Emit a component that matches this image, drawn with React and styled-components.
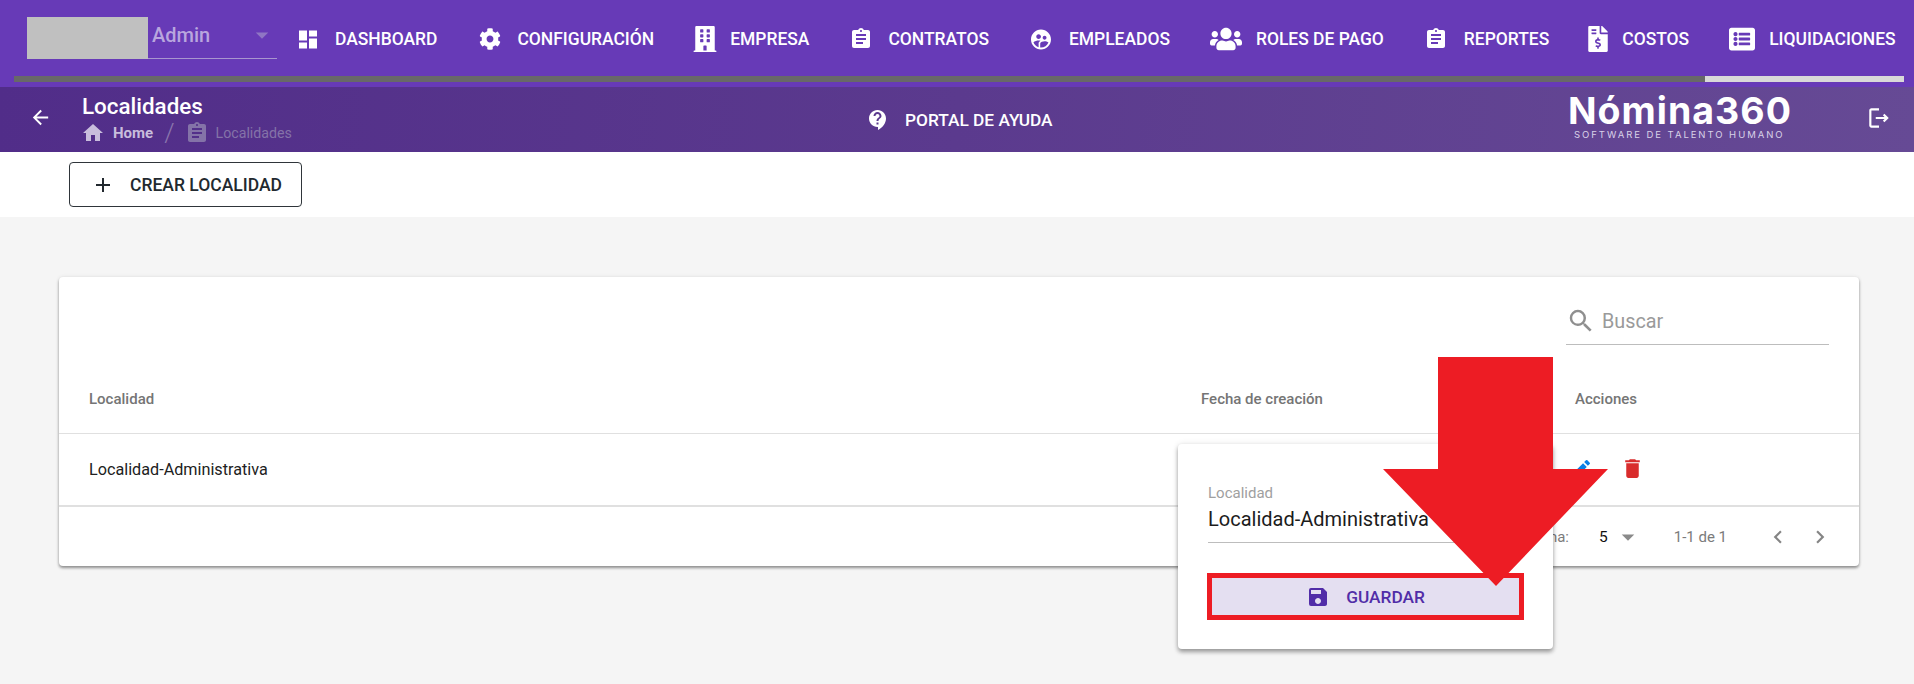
import React from "react";
import styled, { createGlobalStyle } from "styled-components";
import {
  MdDashboard, MdAssignment, MdSupervisedUserCircle, MdArrowBack, MdHome, MdContactSupport,
  MdOutlineLogout, MdAdd, MdSearch, MdEdit, MdDelete, MdArrowDropDown, MdChevronLeft, MdChevronRight, MdSave,
} from "react-icons/md";
import { FaCog, FaBuilding, FaUsers, FaFileInvoiceDollar, FaListAlt } from "react-icons/fa";

const Global = createGlobalStyle`
  html, body { margin: 0; padding: 0; background: #f5f5f5; }
  body { font-family: Roboto, "Liberation Sans", sans-serif; overflow: hidden; }
  * { box-sizing: border-box; }
`;

const Page = styled.div`
  width: 1914px;
  height: 684px;
  position: relative;
  overflow: hidden;
  background: #f5f5f5;
`;

const TopBar = styled.header`
  height: 87px;
  background: #673ab7;
`;

const NavRow = styled.div`
  height: 76px;
  display: flex;
  align-items: flex-start;
`;

const RoleSelect = styled.div`
  position: relative;
  width: 248px;
  height: 59px;
  margin-left: 29px;
  border-bottom: 1px solid #a995cf;
  color: #b9a6de;
  font-size: 20px;
  font-weight: 500;
  flex: none;
`;

const RoleName = styled.span`
  position: absolute;
  left: 123px;
  top: 24px;
  line-height: 22px;
`;

const RoleCaret = styled(MdArrowDropDown)`
  position: absolute;
  right: 0;
  top: 20px;
  color: #8f76c4;
  font-size: 30px;
`;

const RedactedBox = styled.div`
  position: absolute;
  left: -2px;
  top: 17px;
  width: 121px;
  height: 42px;
  background: #c0c0c0;
`;

const Nav = styled.nav`
  display: flex;
  align-items: center;
  height: 78px;
  margin-left: 18.5px;
`;

const NavItem = styled.a`
  display: flex;
  align-items: center;
  margin-right: ${(p) => p.$after}px;
  color: #fff;
  font-size: 17.46px;
  font-weight: 500;
  white-space: nowrap;
  gap: ${(p) => p.$gap}px;
`;

const NavIcon = styled.span`
  display: flex;
  align-items: center;
  justify-content: center;
  flex: none;
  width: ${(p) => p.$w}px;
  font-size: ${(p) => p.$size}px;
  color: #fff;
`;

const ScrollTrack = styled.div`
  height: 6px;
  margin: 0 10px 0 14px;
  background: #d9d9d9;
`;

const ScrollThumb = styled.div`
  height: 100%;
  width: 1691px;
  background: #686868;
`;

const SubBar = styled.div`
  height: 65px;
  display: flex;
  align-items: center;
  background: linear-gradient(95deg, #512d89 0%, #5b3a8e 50%, #664a95 100%);
  color: #fff;
`;

const BackIcon = styled(MdArrowBack)`
  font-size: 23px;
  margin-left: 29px;
  margin-top: -4px;
  flex: none;
`;

const TitleBlock = styled.div`
  margin-left: 30px;
  width: 784px;
  flex: none;
  padding-bottom: 2px;
`;

const PageTitle = styled.div`
  font-size: 22.4px;
  font-weight: 500;
  line-height: 26px;
`;

const Crumbs = styled.div`
  display: flex;
  align-items: center;
  height: 22px;
  margin-top: 3px;
  font-size: 14px;
`;

const CrumbHome = styled.span`
  display: flex;
  align-items: center;
  gap: 8px;
  font-weight: 700;
  color: #c8bddc;
  font-size: 15px;
  svg { font-size: 24px; margin-left: -1px; }
`;

const CrumbSep = styled.span`
  color: #8a76ad;
  font-size: 26px;
  font-weight: 300;
  margin: 0 13px 0 11px;
`;

const CrumbCurrent = styled.span`
  display: flex;
  align-items: center;
  gap: 7px;
  color: #8473a8;
  font-size: 14.2px;
  svg { font-size: 24px; margin-left: -3px; }
`;

const Portal = styled.div`
  display: flex;
  align-items: center;
  gap: 15px;
  width: 702px;
  flex: none;
  font-size: 17.3px;
  font-weight: 500;
  svg { font-size: 24px; }
`;

const Logo = styled.div`
  width: 298px;
  flex: none;
  padding-bottom: 6px;
`;

const LogoName = styled.div`
  font-family: Inter, "Open Sans", sans-serif;
  font-weight: 700;
  font-size: 37.5px;
  line-height: 36px;
  letter-spacing: 1px;
`;

const LogoTag = styled.div`
  font-family: Inter, "Open Sans", sans-serif;
  font-size: 9.5px;
  letter-spacing: 1.95px;
  line-height: 12px;
  margin-left: 6px;
  color: #d9d2e8;
  white-space: nowrap;
`;

const ExitIcon = styled(MdOutlineLogout)`
  font-size: 26px;
  margin-top: -3px;
`;

const ActionBar = styled.div`
  height: 65px;
  background: #fff;
  padding: 10px 0 0 69px;
`;

const CreateButton = styled.button`
  display: flex;
  align-items: center;
  gap: 15px;
  width: 233px;
  height: 45px;
  padding: 0 0 0 22px;
  background: #fff;
  border: 1px solid #2f353a;
  border-radius: 4px;
  color: #22292f;
  font: 500 17.5px Roboto, sans-serif;
  white-space: nowrap;
  svg { font-size: 24px; margin-left: -1px; flex: none; }
`;

const Card = styled.section`
  margin: 60px 0 0 59px;
  width: 1800px;
  height: 289px;
  background: #fff;
  border-radius: 4px;
  box-shadow: 0 2px 3px rgba(0, 0, 0, 0.4), 0 0 4px rgba(0, 0, 0, 0.08);
  display: flex;
  flex-direction: column;
`;

const SearchRow = styled.div`
  height: 68px;
  display: flex;
  justify-content: flex-end;
  padding-right: 30px;
`;

const SearchField = styled.div`
  width: 263px;
  height: 68px;
  border-bottom: 1px solid #bdbdbd;
  display: flex;
  align-items: center;
  padding-top: 21px;
  color: #9a9a9a;
  font-size: 19.8px;
  gap: 6px;
  svg { font-size: 30px; color: #8f8f8f; }
`;

const Columns = `
  display: grid;
  grid-template-columns: 1112px 374px 1fr;
  padding-left: 30px;
  align-items: center;
`;

const HeadRow = styled.div`
  ${Columns}
  height: 89px;
  padding-top: 19px;
  border-bottom: 1px solid #e0e0e0;
  color: #757575;
  font-size: 15px;
  font-weight: 500;
`;

const BodyRow = styled.div`
  ${Columns}
  height: 73px;
  border-bottom: 2px solid #e0e0e0;
  color: #212121;
  font-size: 16.2px;
`;

const ActionIcons = styled.div`
  display: flex;
  align-items: center;
  gap: 27px;
  margin-top: -2px;
`;

const EditIcon = styled(MdEdit)`
  color: #0b7fe6;
  font-size: 24px;
  margin-left: -6px;
`;

const DeleteIcon = styled(MdDelete)`
  color: #d92c2c;
  font-size: 25px;
`;

const Pagination = styled.div`
  flex: 1;
  display: flex;
  justify-content: flex-end;
  align-items: center;
  padding-right: 26px;
  color: #7b7b7b;
  font-size: 15px;
`;

const PageSize = styled.span`
  color: #111;
  font-size: 15.5px;
  margin-left: 30px;
`;

const SizeCaret = styled(MdArrowDropDown)`
  color: #8a8a8a;
  font-size: 30px;
  margin: 0 30.5px 0 5.5px;
`;

const Chevron = styled.span`
  display: flex;
  font-size: 26px;
  color: #858585;
  margin-left: ${(p) => p.$left}px;
`;

const Popover = styled.div`
  position: absolute;
  left: 1178px;
  top: 444px;
  width: 375px;
  height: 205px;
  background: #fff;
  border-radius: 4px;
  box-shadow: 0 3px 4px rgba(0, 0, 0, 0.35), 0 0 6px rgba(0, 0, 0, 0.1);
  padding: 40px 29px 0 30px;
`;

const FieldLabel = styled.div`
  color: #a0a0a0;
  font-size: 15px;
  line-height: 18px;
`;

const FieldValue = styled.div`
  color: #1c1c1c;
  font-size: 20px;
  line-height: 28px;
  height: 41px;
  padding-top: 3px;
  border-bottom: 1px solid #bdbdbd;
  margin-bottom: 30px;
`;

const SaveButton = styled.button`
  display: flex;
  align-items: center;
  justify-content: center;
  gap: 16px;
  width: 317px;
  height: 47px;
  margin-left: -1px;
  padding: 0;
  background: #e4dff1;
  border: 5px solid #ed1c24;
  color: #512da8;
  font: 500 17.3px Roboto, sans-serif;
  svg { font-size: 24px; }
`;

const ArrowOverlay = styled.svg`
  position: absolute;
  left: 1383px;
  top: 357px;
  width: 225px;
  height: 229px;
`;

const navItems = [
  { label: "DASHBOARD", Icon: MdDashboard, w: 24, size: 25, gap: 15.5, after: 40.5 },
  { label: "CONFIGURACIÓN", Icon: FaCog, w: 24, size: 22, gap: 15.5, after: 37.5 },
  { label: "EMPRESA", Icon: FaBuilding, w: 26, size: 26, gap: 12.5, after: 40 },
  { label: "CONTRATOS", Icon: MdAssignment, w: 24, size: 26, gap: 15, after: 40 },
  { label: "EMPLEADOS", Icon: MdSupervisedUserCircle, w: 24, size: 25, gap: 16, after: 39 },
  { label: "ROLES DE PAGO", Icon: FaUsers, w: 34, size: 32, gap: 13, after: 40.5 },
  { label: "REPORTES", Icon: MdAssignment, w: 24, size: 26, gap: 15.5, after: 37 },
  { label: "COSTOS", Icon: FaFileInvoiceDollar, w: 24, size: 26, gap: 12, after: 39 },
  { label: "LIQUIDACIONES", Icon: FaListAlt, w: 28, size: 26, gap: 13, after: 0 },
];

export default function App() {
  return (
    <Page>
      <Global />
      <TopBar>
        <NavRow>
          <RoleSelect>
            <RoleName>Admin</RoleName>
            <RoleCaret />
            <RedactedBox />
          </RoleSelect>
          <Nav>
            {navItems.map(({ label, Icon, w, size, gap, after }) => (
              <NavItem key={label} $gap={gap} $after={after}>
                <NavIcon $w={w} $size={size}><Icon /></NavIcon>
                {label}
              </NavItem>
            ))}
          </Nav>
        </NavRow>
        <ScrollTrack><ScrollThumb /></ScrollTrack>
      </TopBar>
      <SubBar>
        <BackIcon />
        <TitleBlock>
          <PageTitle>Localidades</PageTitle>
          <Crumbs>
            <CrumbHome><MdHome />Home</CrumbHome>
            <CrumbSep>/</CrumbSep>
            <CrumbCurrent><MdAssignment />Localidades</CrumbCurrent>
          </Crumbs>
        </TitleBlock>
        <Portal><MdContactSupport />PORTAL DE AYUDA</Portal>
        <Logo>
          <LogoName>Nómina360</LogoName>
          <LogoTag>SOFTWARE DE TALENTO HUMANO</LogoTag>
        </Logo>
        <ExitIcon />
      </SubBar>
      <ActionBar>
        <CreateButton><MdAdd />CREAR LOCALIDAD</CreateButton>
      </ActionBar>
      <Card>
        <SearchRow>
          <SearchField><MdSearch />Buscar</SearchField>
        </SearchRow>
        <HeadRow>
          <span>Localidad</span>
          <span>Fecha de creación</span>
          <span>Acciones</span>
        </HeadRow>
        <BodyRow>
          <span>Localidad-Administrativa</span>
          <span />
          <ActionIcons><EditIcon /><DeleteIcon /></ActionIcons>
        </BodyRow>
        <Pagination>
          <span>Filas por página:</span>
          <PageSize>5</PageSize>
          <SizeCaret />
          <span>1-1 de 1</span>
          <Chevron $left={38}><MdChevronLeft /></Chevron>
          <Chevron $left={16}><MdChevronRight /></Chevron>
        </Pagination>
      </Card>
      <Popover>
        <FieldLabel>Localidad</FieldLabel>
        <FieldValue>Localidad-Administrativa</FieldValue>
        <SaveButton><MdSave />GUARDAR</SaveButton>
      </Popover>
      <ArrowOverlay viewBox="0 0 225 229" aria-hidden="true">
        <polygon points="55,0 170,0 170,112 225,112 113,229 0,112 55,112" fill="#ed1c24" />
      </ArrowOverlay>
    </Page>
  );
}
